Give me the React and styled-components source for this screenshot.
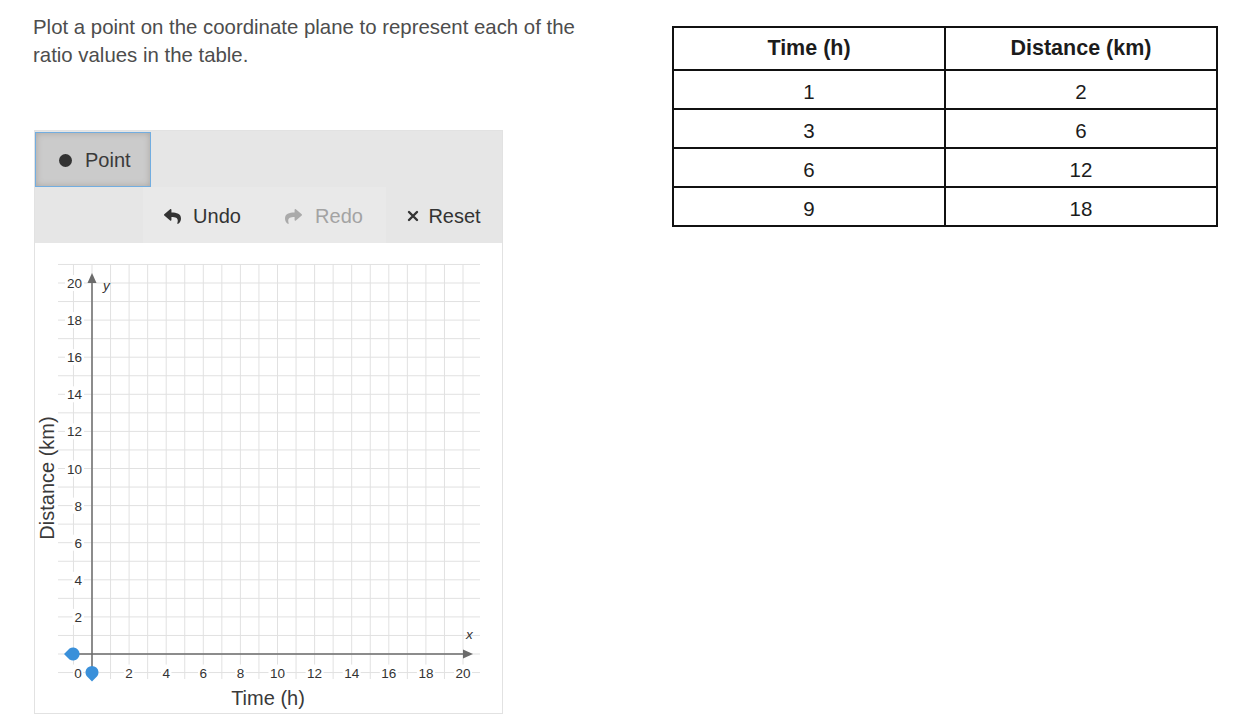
import React from "react";
import styled, { createGlobalStyle } from "styled-components";
import { FaReply, FaShare } from "react-icons/fa";

const GlobalStyle = createGlobalStyle`
  html, body { margin: 0; padding: 0; background: #ffffff; }
  body { font-family: "Liberation Sans", Arial, sans-serif; }
`;

const Page = styled.div`
  display: flex;
  align-items: flex-start;
  padding: 13px 0 0 33px;
`;

const LeftColumn = styled.div`
  width: 639px;
  flex-shrink: 0;
`;

const Prompt = styled.p`
  margin: 0;
  width: 570px;
  font-size: 20.4px;
  line-height: 28px;
  color: #4d4d4d;
`;

const Panel = styled.div`
  margin: 61px 0 0 1px;
  width: 467px;
  border: 1px solid #e2e2e2;
  background: #fff;
`;

const Toolbar = styled.div`
  background: #e6e6e6;
`;

const ModeRow = styled.div`
  display: flex;
  height: 56px;
  padding-top: 1px;
  box-sizing: border-box;
`;

const ModeButton = styled.button`
  display: flex;
  align-items: center;
  gap: 13px;
  width: 116px;
  height: 55px;
  padding: 2px 0 0 23px;
  box-sizing: border-box;
  border: 1px solid #72ade0;
  background: #cbcbcb;
  box-shadow: inset 0 0 6px rgba(110, 95, 80, 0.35);
  font-family: "Liberation Sans", Arial, sans-serif;
  font-size: 20px;
  color: #3a3a3a;
`;

const Dot = styled.span`
  width: 13px;
  height: 13px;
  border-radius: 50%;
  background: #333;
`;

const ActionRow = styled.div`
  display: flex;
  justify-content: flex-end;
  height: 56px;
`;

const ActionButton = styled.button`
  display: flex;
  align-items: center;
  justify-content: center;
  gap: ${(p) => p.$gap}px;
  width: ${(p) => p.$w}px;
  height: 56px;
  padding: 2px 0 0;
  border: none;
  background: ${(p) => (p.$shade ? "#e9e9e9" : "transparent")};
  font-family: "Liberation Sans", Arial, sans-serif;
  font-size: 20px;
  color: ${(p) => (p.$disabled ? "#a3a3a3" : "#333")};
  svg { flex-shrink: 0; }
`;

const GraphArea = styled.div`
  height: 470px;
`;

const TableWrap = styled.table`
  margin-top: 13px;
  width: 546px;
  border-collapse: collapse;
  table-layout: fixed;
  border: 2px solid #111;
  font-family: "Liberation Sans", Arial, sans-serif;
  color: #1c1c1c;
`;

const HeadCell = styled.th`
  border: 2px solid #111;
  height: 41px;
  padding: 0;
  font-size: 21.5px;
  font-weight: bold;
  text-align: center;
`;

const Cell = styled.td`
  border: 2px solid #111;
  height: 33px;
  padding: 4px 0 0;
  line-height: 24px;
  font-size: 20.5px;
  text-align: center;
`;

const OX = 57;
const OY = 411;
const U = 18.55;
const GX0 = 23, GX1 = 445, GY0 = 21, GY1 = 436;

function Graph() {
  const vLines = [];
  for (let i = -1; i <= 20; i++) {
    const x = OX + i * U;
    vLines.push(<line key={"v" + i} x1={x} y1={GY0} x2={x} y2={GY1} stroke="#e1e1e1" strokeWidth="1" />);
  }
  const hLines = [];
  for (let j = -1; j <= 21; j++) {
    const y = OY - j * U;
    hLines.push(<line key={"h" + j} x1={GX0} y1={y} x2={GX1} y2={y} stroke="#e1e1e1" strokeWidth="1" />);
  }
  const labels = [];
  for (let k = 2; k <= 20; k += 2) {
    const w = String(k).length * 7.5 + 3;
    const x = OX + k * U;
    const yx = OY + U;
    labels.push(
      <g key={"xl" + k}>
        <rect x={x - w / 2} y={yx - 8} width={w} height={16} fill="#fff" />
        <text x={x} y={yx + 5} textAnchor="middle" fontSize="13.5" fill="#333">{k}</text>
      </g>
    );
    const y = OY - k * U;
    labels.push(
      <g key={"yl" + k}>
        <rect x={48 - w} y={y - 8} width={w + 1} height={16} fill="#fff" />
        <text x={47} y={y + 5} textAnchor="end" fontSize="13.5" fill="#333">{k}</text>
      </g>
    );
  }
  const axis = "#6b6b6b";
  return (
    <svg width="467" height="470" viewBox="0 0 467 470" fontFamily="Liberation Sans, Arial, sans-serif">
      {vLines}
      {hLines}
      {labels}
      <rect x={38} y={OY + U - 8} width={10} height={16} fill="#fff" />
      <text x={43} y={OY + U + 5} textAnchor="middle" fontSize="13.5" fill="#333">0</text>
      {/* axes */}
      <line x1={32} y1={OY} x2={430} y2={OY} stroke={axis} strokeWidth="1.5" />
      <polygon points={`438,${OY} 428,${OY - 4.5} 428,${OY + 4.5}`} fill={axis} />
      <line x1={OX} y1={38} x2={OX} y2={436} stroke={axis} strokeWidth="1.5" />
      <polygon points={`${OX},30 ${OX - 4.5},40 ${OX + 4.5},40`} fill={axis} />
      <text x={68} y={47} fontSize="13.5" fontStyle="italic" fill="#333">y</text>
      <text x={431} y={396} fontSize="13.5" fontStyle="italic" fill="#333">x</text>
      {/* axis titles */}
      <text x={233} y={462} textAnchor="middle" fontSize="20" fill="#3a3a3a">Time (h)</text>
      <text transform="translate(19 235) rotate(-90)" textAnchor="middle" fontSize="20" fill="#3a3a3a">Distance (km)</text>
      {/* draggable points */}
      <path d={`M ${38 - 9} ${OY} L ${38 - 3.5} ${OY - 5.4} A 6.5 6.5 0 1 1 ${38 - 3.5} ${OY + 5.4} Z`} fill="#3a90da" />
      <path d={`M ${OX} ${OY + U + 9} L ${OX - 5.4} ${OY + U + 3.5} A 6.5 6.5 0 1 1 ${OX + 5.4} ${OY + U + 3.5} Z`} fill="#3a90da" />
    </svg>
  );
}

const rows = [
  [1, 2],
  [3, 6],
  [6, 12],
  [9, 18],
];

export default function App() {
  return (
    <>
      <GlobalStyle />
      <Page>
        <LeftColumn>
          <Prompt>
            Plot a point on the coordinate plane to represent each of the ratio values in the table.
          </Prompt>
          <Panel>
            <Toolbar>
              <ModeRow>
                <ModeButton>
                  <Dot />
                  Point
                </ModeButton>
              </ModeRow>
              <ActionRow>
                <ActionButton $w={119} $gap={12} $shade>
                  <FaReply size={17} color="#333" />
                  Undo
                </ActionButton>
                <ActionButton $w={124} $gap={13} $shade $disabled>
                  <FaShare size={17} color="#aaa" />
                  Redo
                </ActionButton>
                <ActionButton $w={116} $gap={9}>
                  <svg width="12" height="12" viewBox="0 0 12 12">
                    <path d="M2 2 L10 10 M10 2 L2 10" stroke="#333" strokeWidth="2.4" strokeLinecap="round" />
                  </svg>
                  Reset
                </ActionButton>
              </ActionRow>
            </Toolbar>
            <GraphArea>
              <Graph />
            </GraphArea>
          </Panel>
        </LeftColumn>
        <TableWrap>
          <thead>
            <tr>
              <HeadCell>Time (h)</HeadCell>
              <HeadCell>Distance (km)</HeadCell>
            </tr>
          </thead>
          <tbody>
            {rows.map(([t, d]) => (
              <tr key={t}>
                <Cell>{t}</Cell>
                <Cell>{d}</Cell>
              </tr>
            ))}
          </tbody>
        </TableWrap>
      </Page>
    </>
  );
}
